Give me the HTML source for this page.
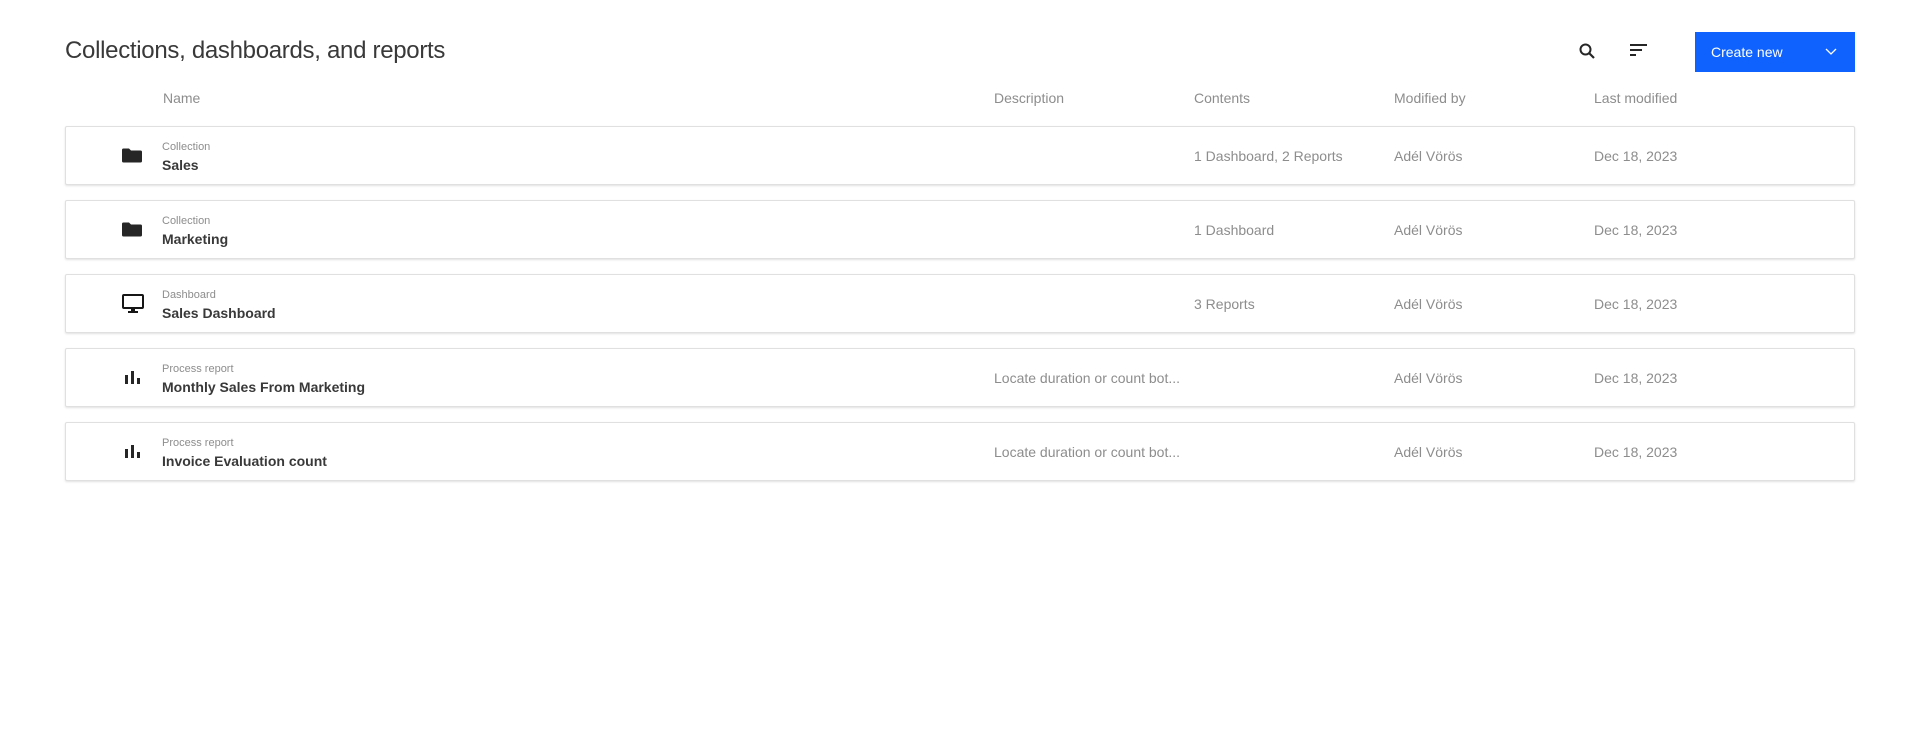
<!DOCTYPE html>
<html><head><meta charset="utf-8"><style>
*{box-sizing:border-box;margin:0;padding:0}
body{width:1920px;height:734px;background:#fff;font-family:"Liberation Sans",sans-serif;position:relative;overflow:hidden}
.abs{position:absolute;white-space:nowrap}
h1{position:absolute;left:65px;top:37px;font-size:24px;font-weight:400;color:#393939;letter-spacing:-0.3px}
.hd{position:absolute;top:90px;font-size:14px;color:#8d8d8d}
.btn{position:absolute;left:1695px;top:32px;width:160px;height:40px;background:#0f62fe;color:#fff;font-size:14px;padding:12px 16px}
.card{position:absolute;left:65px;width:1790px;height:59px;border:1px solid #e0e0e0;border-radius:2px;box-shadow:0 1px 2px rgba(0,0,0,.12);background:#fff}
.lbl{position:absolute;left:96px;top:14px;font-size:11px;color:#8d8d8d}
.ttl{position:absolute;left:96px;top:30px;font-size:14px;font-weight:700;color:#393939}
.v{position:absolute;top:21px;font-size:14px;color:#8d8d8d;white-space:nowrap}
.ic{position:absolute;left:55px;top:18px}
</style></head><body>
<h1>Collections, dashboards, and reports</h1>
<svg class="abs" style="left:1578px;top:42px" width="18" height="18" viewBox="0 0 18 18"><circle cx="7.5" cy="7.5" r="5" fill="none" stroke="#262626" stroke-width="2"/><path d="M11 11l5 5" stroke="#262626" stroke-width="2.2"/></svg>
<svg class="abs" style="left:1630px;top:44px" width="18" height="14"><rect x="0" y="0" width="17" height="2" fill="#262626"/><rect x="0" y="5" width="12" height="2" fill="#262626"/><rect x="0" y="10" width="6" height="2" fill="#262626"/></svg>
<div class="btn">Create new<svg style="position:absolute;left:130px;top:16px" width="12" height="8"><path d="M1 1l5 5 5-5" fill="none" stroke="#fff" stroke-width="1.3"/></svg></div>
<div class="hd" style="left:163px">Name</div>
<div class="hd" style="left:994px">Description</div>
<div class="hd" style="left:1194px">Contents</div>
<div class="hd" style="left:1394px">Modified by</div>
<div class="hd" style="left:1594px">Last modified</div>

<div class="card" style="top:126px">
<svg class="ic" width="22" height="20" viewBox="0 0 22 20"><path d="M1 5 Q1 3.5 2.5 3.5 H8 L10 5.5 H19.5 Q21 5.5 21 7 V16 Q21 17.5 19.5 17.5 H2.5 Q1 17.5 1 16Z" fill="#262626"/></svg>
<div class="lbl">Collection</div><div class="ttl">Sales</div>
<div class="v" style="left:1128px">1 Dashboard, 2 Reports</div><div class="v" style="left:1328px">Adél Vörös</div><div class="v" style="left:1528px">Dec 18, 2023</div></div>

<div class="card" style="top:200px">
<svg class="ic" width="22" height="20" viewBox="0 0 22 20"><path d="M1 5 Q1 3.5 2.5 3.5 H8 L10 5.5 H19.5 Q21 5.5 21 7 V16 Q21 17.5 19.5 17.5 H2.5 Q1 17.5 1 16Z" fill="#262626"/></svg>
<div class="lbl">Collection</div><div class="ttl">Marketing</div>
<div class="v" style="left:1128px">1 Dashboard</div><div class="v" style="left:1328px">Adél Vörös</div><div class="v" style="left:1528px">Dec 18, 2023</div></div>

<div class="card" style="top:274px">
<svg class="ic" width="24" height="22" viewBox="0 0 24 22"><rect x="2" y="2" width="20" height="13" rx="1" fill="none" stroke="#161616" stroke-width="2"/><rect x="10" y="15" width="4" height="3" fill="#161616"/><rect x="7" y="18" width="10" height="2" fill="#161616"/></svg>
<div class="lbl">Dashboard</div><div class="ttl">Sales Dashboard</div>
<div class="v" style="left:1128px">3 Reports</div><div class="v" style="left:1328px">Adél Vörös</div><div class="v" style="left:1528px">Dec 18, 2023</div></div>

<div class="card" style="top:348px">
<svg class="ic" style="left:57px;top:20px" width="20" height="18"><rect x="2" y="6" width="3" height="9" fill="#262626"/><rect x="8" y="2" width="3" height="13" fill="#262626"/><rect x="14" y="9" width="3" height="6" fill="#262626"/></svg>
<div class="lbl">Process report</div><div class="ttl">Monthly Sales From Marketing</div>
<div class="v" style="left:928px">Locate duration or count bot...</div><div class="v" style="left:1328px">Adél Vörös</div><div class="v" style="left:1528px">Dec 18, 2023</div></div>

<div class="card" style="top:422px">
<svg class="ic" style="left:57px;top:20px" width="20" height="18"><rect x="2" y="6" width="3" height="9" fill="#262626"/><rect x="8" y="2" width="3" height="13" fill="#262626"/><rect x="14" y="9" width="3" height="6" fill="#262626"/></svg>
<div class="lbl">Process report</div><div class="ttl">Invoice Evaluation count</div>
<div class="v" style="left:928px">Locate duration or count bot...</div><div class="v" style="left:1328px">Adél Vörös</div><div class="v" style="left:1528px">Dec 18, 2023</div></div>
</body></html>
